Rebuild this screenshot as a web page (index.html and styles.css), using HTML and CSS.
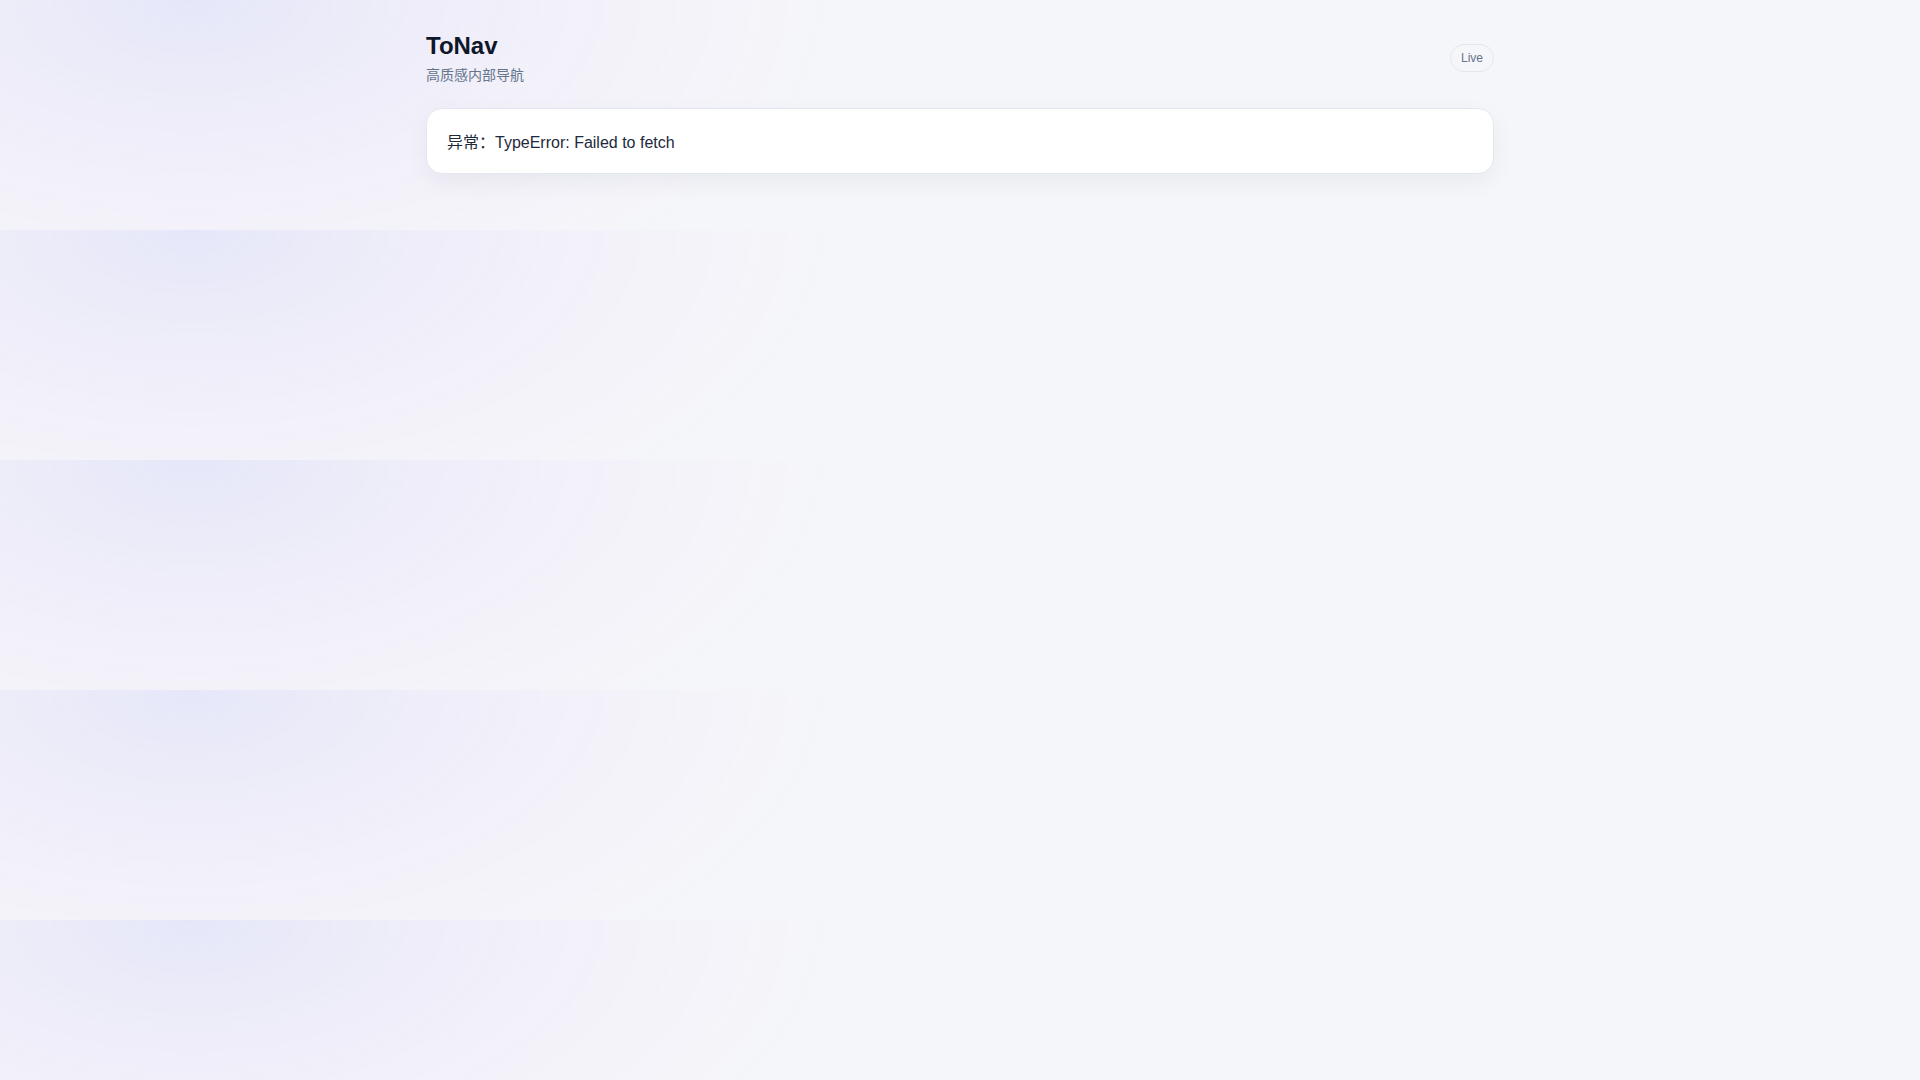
FILE: index.html
```html
<!DOCTYPE html>
<html lang="zh-CN">
<head>
<meta charset="utf-8">
<title>ToNav</title>
<link rel="stylesheet" href="styles.css">
</head>
<body>
<div class="container">
  <header class="header">
    <div class="brand">
      <h1 class="title">ToNav</h1>
      <p class="subtitle">高质感内部导航</p>
    </div>
    <span class="pill">Live</span>
  </header>
  <main class="main">
    <div class="card">异常：TypeError: Failed to fetch</div>
  </main>
</div>
</body>
</html>
```
FILE: styles.css
```css
* { box-sizing: border-box; }

body {
  margin: 0;
  font-family: "Liberation Sans", Arial, "Noto Sans CJK SC", sans-serif;
  color: #0f172a;
  background-color: #f5f6fa;
  background-image:
    radial-gradient(650px 340px at 10% 0%, rgba(99, 102, 241, 0.105), rgba(168, 85, 247, 0.03) 55%, transparent 100%);
}

.container {
  max-width: 1100px;
  margin: 0 auto;
  padding: 32px 16px 56px;
}

.header {
  display: flex;
  align-items: center;
  justify-content: space-between;
}

.brand {
  display: flex;
  flex-direction: column;
  gap: 4px;
}

.title {
  margin: 0;
  font-size: 24px;
  font-weight: 700;
  color: #0f172a;
}

.subtitle {
  margin: 0;
  font-size: 14px;
  color: #64748b;
}

.pill {
  display: inline-block;
  height: 28px;
  padding: 0 10px;
  border: 1px solid #e2e8f0;
  border-radius: 999px;
  font-size: 12px;
  line-height: 26px;
  color: #64748b;
}

.main {
  margin-top: 24px;
}

.card {
  background: #ffffff;
  border: 1px solid #e2e8f0;
  border-radius: 16px;
  padding: 20px;
  font-size: 16px;
  color: #1e293b;
  box-shadow: 0 8px 24px rgba(15, 23, 42, 0.05);
}
```
